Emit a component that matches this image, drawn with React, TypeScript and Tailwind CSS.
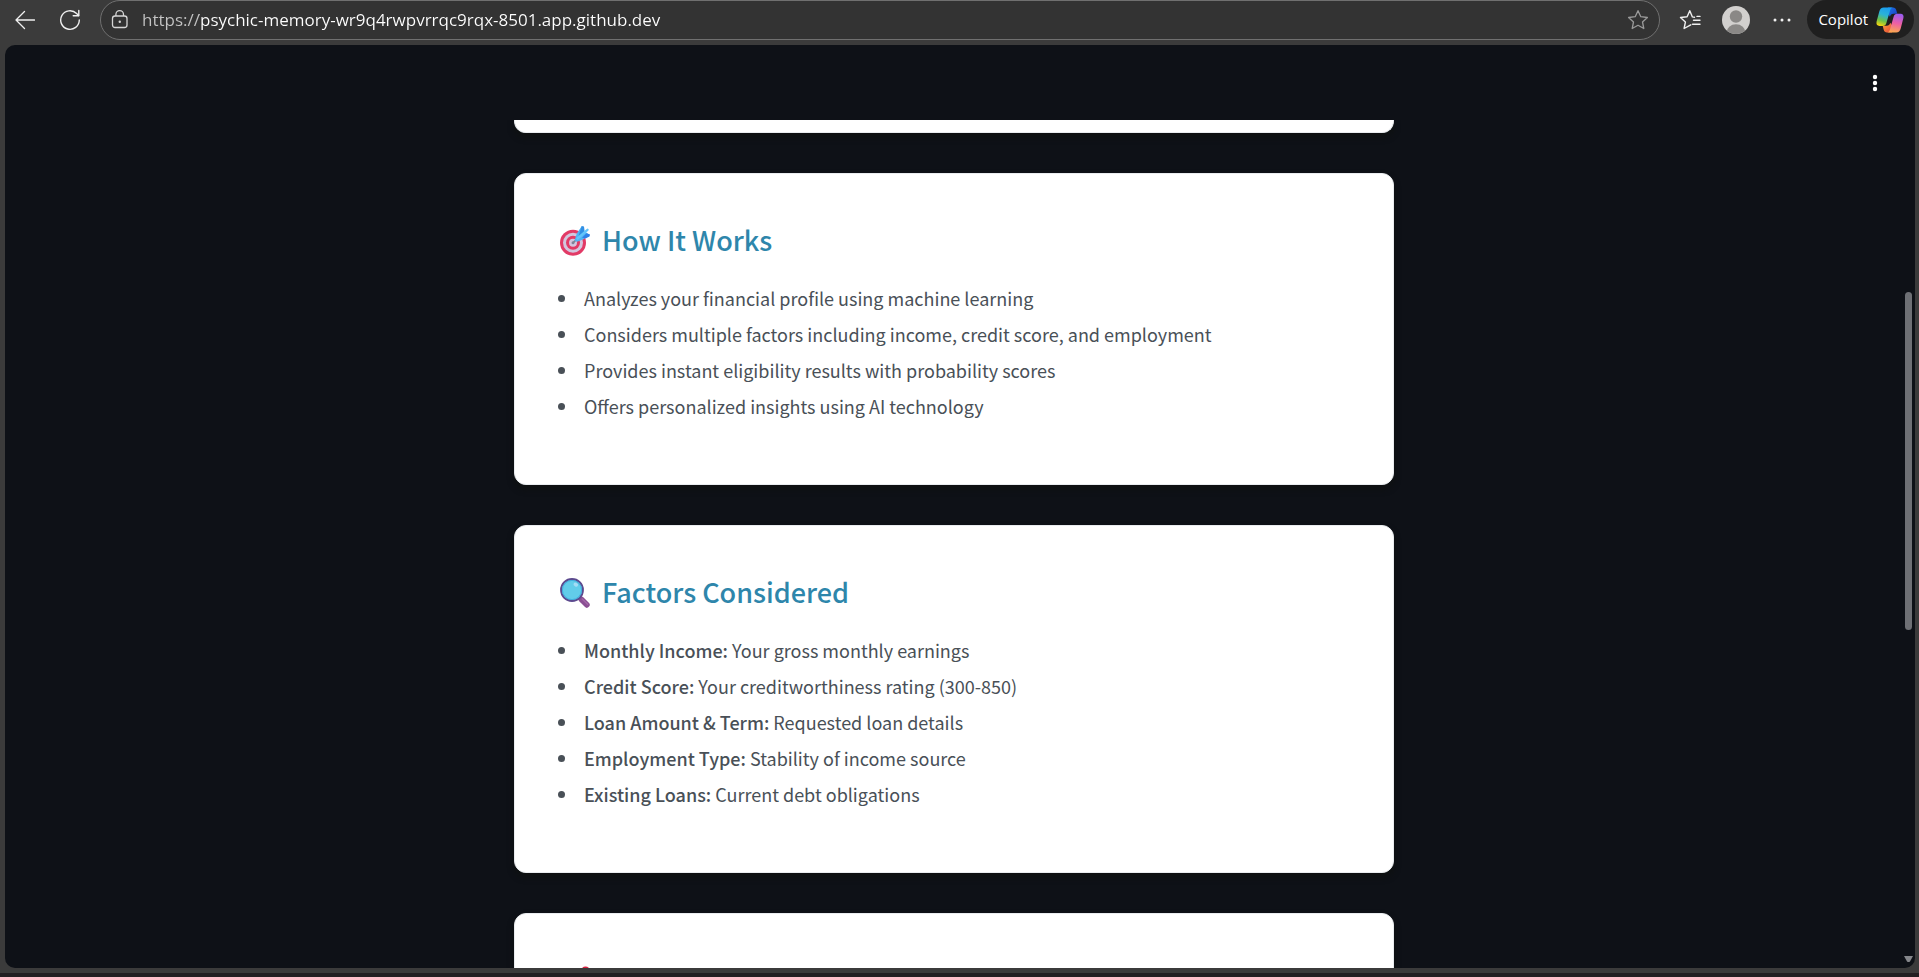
import React from "react";

type Item = { label?: string; text: string };

function BackIcon() {
  return (
    <svg width="20" height="20" viewBox="0 0 20 20" fill="none" stroke="#f0f0f0" strokeWidth="1.3" strokeLinecap="round" strokeLinejoin="round" aria-hidden="true">
      <path d="M19.5 10H1M9.5 1.5L1 10l8.500 8.500" />
    </svg>
  );
}

function ReloadIcon() {
  return (
    <svg width="22" height="22" viewBox="0 0 22 22" fill="none" stroke="#f0f0f0" strokeWidth="1.4" strokeLinecap="round" strokeLinejoin="round" aria-hidden="true">
      <path d="M20.300 11A9.300 9.300 0 1 1 17.600 4.500L19.500 6.500" />
      <path d="M19.800 1.500V6.800H14.200" />
    </svg>
  );
}

function LockIcon() {
  return (
    <svg width="18" height="20" viewBox="0 0 18 20" fill="none" stroke="#d6d6d6" strokeWidth="1.3" strokeLinejoin="round" aria-hidden="true">
      <rect x="1.500" y="6" width="14.500" height="11.500" rx="2.500" />
      <path d="M4.900 6V4.500a3.800 3.800 0 0 1 7.600 0V6" />
      <circle cx="8.800" cy="11.800" r="1.200" fill="#d6d6d6" stroke="none" />
    </svg>
  );
}

function StarIcon() {
  return (
    <svg width="22" height="22" viewBox="0 0 22 22" fill="none" stroke="#9a9a9a" strokeWidth="1.3" strokeLinejoin="round" aria-hidden="true">
      <path d="M11 1.700l2.800 6 6.600.8-4.900 4.500 1.300 6.500L11 16.300l-5.800 3.200 1.300-6.500L1.600 8.500l6.600-.8z" />
    </svg>
  );
}

function FavoritesIcon() {
  return (
    <svg width="22" height="22" viewBox="0 0 22 22" fill="none" stroke="#f0f0f0" strokeWidth="1.4" strokeLinecap="round" strokeLinejoin="round" aria-hidden="true">
      <path d="M15.500 8.200L13.400 7.900 10.800 1.700 8.100 7.800 1.500 8.500l4.900 4.600-1.300 6.400 5.700-3.200 1-.5" />
      <path d="M14.500 11.300h6.500M13.500 15.300h7.500M18 7.400h3" />
    </svg>
  );
}

function Avatar() {
  return (
    <svg width="28" height="28" viewBox="0 0 28 28" aria-hidden="true">
      <clipPath id="avatar-clip">
        <circle cx="14" cy="14" r="14" />
      </clipPath>
      <g clipPath="url(#avatar-clip)">
        <rect width="28" height="28" fill="#d2d0ce" />
        <circle cx="14" cy="10.500" r="6.200" fill="#8a8886" />
        <ellipse cx="14" cy="26.500" rx="9.500" ry="8.300" fill="#8a8886" />
      </g>
    </svg>
  );
}

function CopilotLogo() {
  return (
    <svg width="28" height="26" viewBox="0 0 28 26" aria-hidden="true">
      <defs>
        <linearGradient id="cp-a" x1="0.6" y1="0" x2="0.3" y2="1">
          <stop offset="0" stopColor="#1a9df0" />
          <stop offset="0.400" stopColor="#2bb3d6" />
          <stop offset="0.720" stopColor="#6cc04a" />
          <stop offset="1" stopColor="#f2d40f" />
        </linearGradient>
        <linearGradient id="cp-b" x1="0.6" y1="0" x2="0.4" y2="1">
          <stop offset="0" stopColor="#9a5cf0" />
          <stop offset="0.500" stopColor="#ee5fa5" />
          <stop offset="1" stopColor="#fba94f" />
        </linearGradient>
        <linearGradient id="cp-c" x1="0" y1="0" x2="1" y2="0.600">
          <stop offset="0" stopColor="#1c7be8" />
          <stop offset="1" stopColor="#1a45c9" />
        </linearGradient>
        <linearGradient id="cp-d" x1="0" y1="0" x2="1" y2="1">
          <stop offset="0" stopColor="#f9a43a" />
          <stop offset="1" stopColor="#e8403a" />
        </linearGradient>
      </defs>
      <path d="M12 0.500h5c1.800 0 2.800 1 3.300 2.800l1 3.400h-3.800c-2 0-3 1-3.600 3L11 5z" fill="url(#cp-c)" />
      <path d="M16 25.500h-5c-1.800 0-2.800-1-3.300-2.800l-1-3.900h4c2 0 3-1 3.600-3L17 20z" fill="url(#cp-d)" />
      <path d="M7.800 0.500H17c-1.700.2-2.500 1.500-3 3.300l-3.700 12.500c-.6 1.900-1.700 2.700-3.500 2.700H3.500C1 19 0 17.200.6 14.600L3.300 4.500C4 1.900 5.400.5 7.800.5z" fill="url(#cp-a)" />
      <path d="M20.200 25.500H11c1.700-.2 2.500-1.500 3-3.300L17.700 9.400c.6-1.900 1.700-2.700 3.500-2.700h3.300c2.500 0 3.500 1.800 2.900 4.400l-2.700 10.400c-.7 2.600-2.100 4-4.500 4z" fill="url(#cp-b)" />
    </svg>
  );
}

function TargetEmoji() {
  return (
    <svg width="32" height="32" viewBox="-1 -1 32 32" overflow="visible" aria-hidden="true">
      <circle cx="14" cy="17.800" r="13" fill="#e23a66" />
      <circle cx="14" cy="17.800" r="10" fill="#d3c6de" />
      <circle cx="14" cy="17.800" r="7" fill="#e23a66" />
      <circle cx="14" cy="17.800" r="4" fill="#d3c6de" />
      <circle cx="14" cy="17.800" r="1.500" fill="#8d7aa0" />
      <path d="M14 17.800L22 9.800" stroke="#7d8794" strokeWidth="1.800" strokeLinecap="round" />
      <path d="M15.500 15.500L17.800 8.500 22.800 1l1.700 4.500L30.800 10 24 14.500 18 16.800z" fill="#50b4f4" />
      <path d="M22.800 1l2.200.5.600 4.500-4.500 5.500-1.500-1z" fill="#318fe4" />
      <path d="M23 12.800l4.500-4.500 3.500 1.200-.5 2L26.500 13.500z" fill="#2f80e8" />
      <path d="M18.500 13.500L28.500 4.800" stroke="#63c4fa" strokeWidth="2.400" strokeLinecap="round" />
    </svg>
  );
}

function MagnifierEmoji() {
  return (
    <svg width="32" height="32" viewBox="-1 -1 32 32" overflow="visible" aria-hidden="true">
      <path d="M20 20.500l3 3" stroke="#6a4a8a" strokeWidth="3" />
      <path d="M22.500 22.500l5.300 5.300" stroke="#8b4f93" strokeWidth="5.800" strokeLinecap="round" />
      <path d="M23.300 22l5.300 5.300" stroke="#a266a6" strokeWidth="1.600" strokeLinecap="round" />
      <circle cx="13" cy="13" r="11" fill="#62cdea" stroke="#5c4a8e" strokeWidth="1.800" />
      <circle cx="13" cy="13" r="9.600" fill="none" stroke="#42aede" strokeWidth="1" />
      <ellipse cx="16.800" cy="7.600" rx="2.400" ry="1.800" fill="#a5dcf5" transform="rotate(30 16.800 7.600)" />
    </svg>
  );
}

function PinEmoji() {
  return (
    <svg width="32" height="32" viewBox="-1 -1 32 32" overflow="visible" aria-hidden="true">
      <path d="M16 20l-1 12h4l-1-12z" fill="#9aa3ad" />
      <circle cx="26.500" cy="6" r="4.500" fill="#d8213f" />
    </svg>
  );
}

function Card({ icon, title, items }: { icon: React.ReactNode; title?: string; items: Item[] }) {
  return (
    <section className="rounded-xl border border-[#e9ecef] bg-white px-[43px] pt-[39px] pb-[60px] shadow-[0_4px_6px_rgba(14,17,16,0.9)]">
      <h2 className="mb-[13px] flex h-[54px] items-center gap-3 font-['Noto_Sans_CJK_SC_Medium','Noto_Sans_CJK_SC',sans-serif] text-[27px] font-semibold text-[#2e86ab]">
        {icon}
        {title}
      </h2>
      <ul className="text-lg leading-9 text-[#495057]">
        {items.map((item) => (
          <li key={item.text} className="flex items-center gap-[19px] before:size-[7px] before:shrink-0 before:rounded-full before:bg-[#495057]">
            <span>
              {item.label && <strong className="font-['Noto_Sans_CJK_SC_Medium','Noto_Sans_CJK_SC',sans-serif] font-semibold">{item.label} </strong>}
              {item.text}
            </span>
          </li>
        ))}
      </ul>
    </section>
  );
}

const howItWorks: Item[] = [
  { text: "Analyzes your financial profile using machine learning" },
  { text: "Considers multiple factors including income, credit score, and employment" },
  { text: "Provides instant eligibility results with probability scores" },
  { text: "Offers personalized insights using AI technology" },
];

const factors: Item[] = [
  { label: "Monthly Income:", text: "Your gross monthly earnings" },
  { label: "Credit Score:", text: "Your creditworthiness rating (300-850)" },
  { label: "Loan Amount & Term:", text: "Requested loan details" },
  { label: "Employment Type:", text: "Stability of income source" },
  { label: "Existing Loans:", text: "Current debt obligations" },
];

function BrowserBar() {
  return (
    <header className="flex h-[45px] shrink-0 items-start pr-[5px] pl-[15px] font-['Open_Sans','Noto_Sans',sans-serif]">
      <nav className="flex h-10 items-center gap-6 pr-[19px]">
        <button type="button" aria-label="Back">
          <BackIcon />
        </button>
        <button type="button" aria-label="Refresh">
          <ReloadIcon />
        </button>
      </nav>
      <div className="flex h-10 min-w-0 flex-1 items-center gap-[13px] rounded-full border border-[#707070] bg-[#333333] px-[10px]">
        <button type="button" aria-label="Site information">
          <LockIcon />
        </button>
        <input
          type="text"
          aria-label="Address"
          defaultValue="https://psychic-memory-wr9q4rwpvrrqc9rqx-8501.app.github.dev"
          className="h-8 min-w-0 flex-1 bg-linear-[90deg,#c4c4c4_57px,#ffffff_57px] bg-clip-text pb-[2px] text-[17px] text-transparent outline-none"
        />
        <button type="button" aria-label="Add to favorites">
          <StarIcon />
        </button>
      </div>
      <div className="flex h-10 items-center gap-[21px] pr-4 pl-[19px]">
        <button type="button" aria-label="Favorites">
          <FavoritesIcon />
        </button>
        <button type="button" aria-label="Profile">
          <Avatar />
        </button>
        <button type="button" aria-label="Settings and more" className="ml-[2px]">
          <svg width="18" height="18" viewBox="0 0 18 18" fill="#f0f0f0" aria-hidden="true">
            <circle cx="2" cy="9" r="1.500" />
            <circle cx="9" cy="9" r="1.500" />
            <circle cx="16" cy="9" r="1.500" />
          </svg>
        </button>
      </div>
      <button type="button" className="flex h-[39px] items-center gap-2 rounded-full bg-[#1f1f1f] pr-[10px] pl-[11px] text-[15px] text-white">
        Copilot
        <CopilotLogo />
      </button>
    </header>
  );
}

export default function App() {
  return (
    <div className="flex h-screen flex-col bg-[#3b3b3b]">
      <BrowserBar />
      <div className="mr-1 ml-[5px] flex min-h-0 flex-1 overflow-hidden rounded-[10px] bg-[#0e1117]">
        <div className="flex min-w-0 flex-1 flex-col">
          <div className="flex h-[75px] shrink-0 items-center justify-end pr-[18px]">
            <button type="button" aria-label="Main menu" className="p-1">
              <svg width="12" height="20" viewBox="0 0 12 20" fill="#ffffff" aria-hidden="true">
                <circle cx="6" cy="4" r="2.200" />
                <circle cx="6" cy="10" r="2.200" />
                <circle cx="6" cy="16" r="2.200" />
              </svg>
            </button>
          </div>
          <main className="min-h-0 flex-1 overflow-hidden font-['Noto_Sans_CJK_SC',sans-serif]">
            <div className="mx-auto flex max-w-[880px] flex-col gap-10">
              <div className="h-[13px] rounded-b-xl border-x border-b border-[#e9ecef] bg-white shadow-[0_4px_6px_rgba(14,17,16,0.9)]" />
              <Card icon={<TargetEmoji />} title="How It Works" items={howItWorks} />
              <Card icon={<MagnifierEmoji />} title="Factors Considered" items={factors} />
              <Card icon={<PinEmoji />} items={[]} />
            </div>
          </main>
        </div>
        <div className="flex w-3 shrink-0 flex-col items-start pb-[6px] pl-px" aria-hidden="true">
          <div className="flex-[247]" />
          <div className="ml-px w-[7px] flex-[338] rounded-full bg-[#6e7075]" />
          <div className="flex-[326]" />
          <svg width="9" height="6" viewBox="0 0 9 6" fill="#85878b">
            <path d="M0 0h9L6 5.500Q4.500 6.500 3 5.500z" />
          </svg>
        </div>
      </div>
      <div className="mt-[5px] h-1 shrink-0 bg-[#221f22]" />
    </div>
  );
}
